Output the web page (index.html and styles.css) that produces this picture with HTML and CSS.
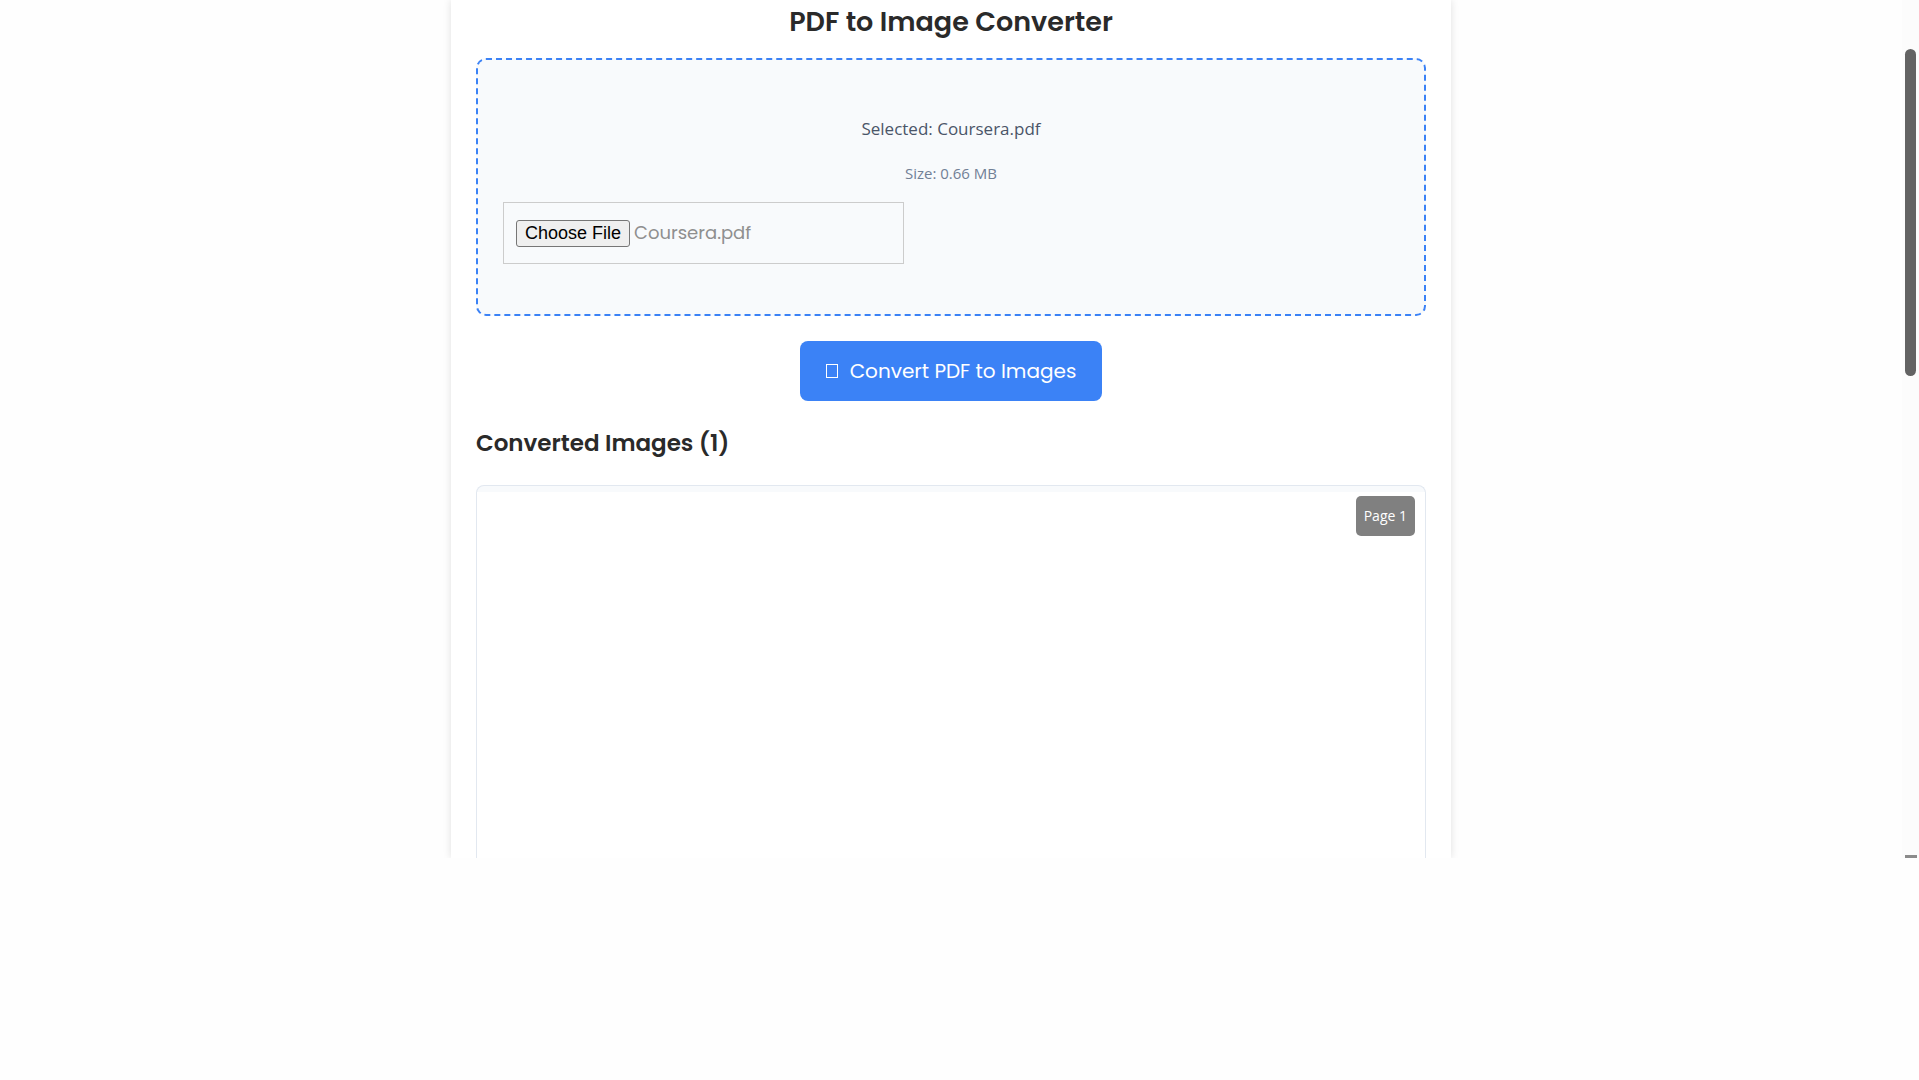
FILE: index.html
```html
<!DOCTYPE html>
<html lang="en">
<head>
<meta charset="utf-8">
<title>PDF to Image Converter</title>
<link rel="stylesheet" href="styles.css">
</head>
<body>
<div class="window">
  <main class="page">
    <section class="converter">
      <h1 class="title">PDF to Image Converter</h1>
      <div class="upload">
        <label class="upload-name" for="pdf-file">Selected: Coursera.pdf</label>
        <p class="upload-size">Size: 0.66 MB</p>
        <input class="upload-input" id="pdf-file" type="file" accept="application/pdf">
      </div>
      <button class="convert" type="button"><span class="convert-icon"></span>Convert PDF to Images</button>
      <h2 class="subtitle">Converted Images (1)</h2>
      <article class="result">
        <div class="result-page"></div>
        <span class="badge">Page 1</span>
      </article>
    </section>
  </main>
  <div class="scrollbar"><div class="thumb"></div><div class="scroll-end"></div></div>
</div>
<script src="script.js"></script>
</body>
</html>
```
FILE: styles.css
```css
* { box-sizing: border-box; }

body {
  margin: 0;
  background: #fefefe;
  font-family: "Segoe UI", "Open Sans", sans-serif;
}

.window {
  display: flex;
  height: calc(100vh - 222px);
  overflow: hidden;
}

.page {
  flex: 1;
  display: flex;
  justify-content: center;
}

.converter {
  display: flex;
  flex-direction: column;
  width: 100%;
  max-width: 1000px;
  padding: 0 25px;
  background: #fff;
  box-shadow: 0 0 8px rgba(0, 0, 0, 0.12);
}

.title,
.subtitle {
  margin: 0;
  color: #2a2a2a;
  font-family: Poppins, Inter, sans-serif;
  font-weight: 600;
}

.title {
  padding: 2px 0 16px;
  font-size: 27px;
  line-height: 40px;
  text-align: center;
}

.upload {
  display: flex;
  flex-direction: column;
  align-items: center;
  height: 258px;
  padding: 54px 25px 0;
  border: 2px dashed #3b82f6;
  border-radius: 10px;
  background: #f8fafc;
}

.upload-name {
  color: #4a5568;
  font-size: 17px;
  line-height: 30px;
}

.upload-size {
  margin: 16px 0;
  color: #718096;
  font-size: 15px;
  line-height: 26px;
}

.upload-input {
  align-self: flex-start;
  width: 100%;
  max-width: 401px;
  height: 62px;
  padding: 16px 12px;
  border: 1px solid #ccc;
  color: #8f8f8f;
  font-family: Poppins, Inter, sans-serif;
  font-size: 18px;
}

.upload-input::file-selector-button {
  height: 27px;
  padding: 1px 8px;
  border: 1px solid #767676;
  border-radius: 3px;
  background: #efefef;
  color: #000;
  font-family: Arial, "Liberation Sans", sans-serif;
  font-size: 18px;
}

.convert {
  display: flex;
  align-items: center;
  align-self: center;
  gap: 12px;
  height: 60px;
  margin: 25px 0;
  padding: 0 26px;
  border: 0;
  border-radius: 8px;
  background: #3b82f6;
  color: #fff;
  font-family: Poppins, Inter, sans-serif;
  font-size: 20px;
}

.convert-icon {
  width: 12px;
  height: 14px;
  border: 1px solid #fff;
}

.subtitle {
  font-size: 23px;
  line-height: 34px;
}

.result {
  position: relative;
  flex: 1;
  margin-top: 25px;
  padding-top: 6px;
  border: 1px solid #e2e8f0;
  border-bottom: 0;
  border-radius: 8px 8px 0 0;
  background: #f8fafc;
}

.result-page {
  height: 100%;
  background: #fff;
}

.badge {
  position: absolute;
  top: 10px;
  right: 10px;
  padding: 0 8px;
  border-radius: 5px;
  background: #808080;
  color: #fff;
  font-size: 14px;
  line-height: 40px;
}

.scrollbar {
  display: flex;
  flex-direction: column;
  align-items: center;
  justify-content: space-between;
  width: 17px;
  padding-top: 49px;
  background: #fcfcfc;
}

.thumb {
  width: 11px;
  height: 327px;
  border-radius: 6px;
  background: #636363;
}

.scroll-end {
  width: 12px;
  height: 3px;
  background: #8b8b8b;
}
```
FILE: script.js
```js
const selection = new DataTransfer();
selection.items.add(new File([""], "Coursera.pdf", { type: "application/pdf" }));
document.getElementById("pdf-file").files = selection.files;
```
